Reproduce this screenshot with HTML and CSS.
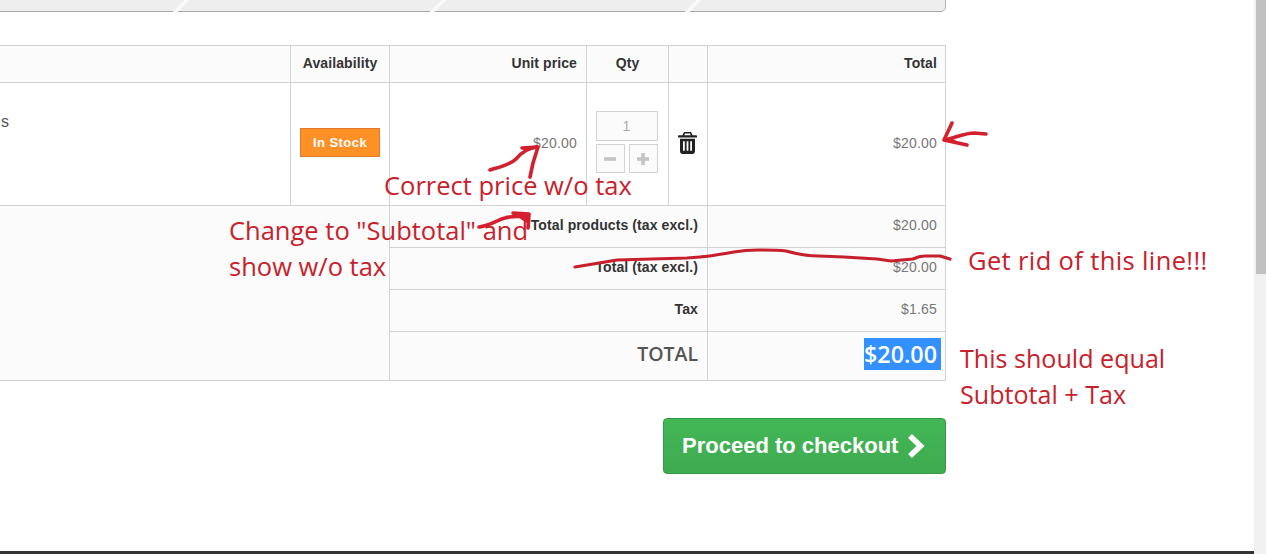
FILE: index.html
```html
<!DOCTYPE html>
<html lang="en">
<head>
<meta charset="utf-8">
<title>Shopping cart summary</title>
<link rel="stylesheet" href="styles.css">
</head>
<body>
<div class="window">
  <main class="page">
    <div class="content">
      <nav class="steps">
        <div class="step step-1"></div>
        <div class="step step-2"></div>
        <div class="step step-3"></div>
        <div class="step step-4"></div>
      </nav>
      <table class="cart">
        <colgroup>
          <col class="c-product"><col class="c-avail"><col class="c-unit"><col class="c-qty"><col class="c-del"><col class="c-total">
        </colgroup>
        <thead>
          <tr class="r-head">
            <th></th>
            <th class="center">Availability</th>
            <th class="right">Unit price</th>
            <th class="center">Qty</th>
            <th></th>
            <th class="right">Total</th>
          </tr>
        </thead>
        <tbody>
          <tr class="r-item">
            <td class="product"><span class="product-name">s</span></td>
            <td class="center stock-cell"><span class="stock">In Stock</span></td>
            <td class="right price">$20.00</td>
            <td class="center qty-cell">
              <div class="qty">
                <div class="qty-input">1</div>
                <div class="qty-btns">
                  <div class="qty-btn"><svg class="qty-ico" viewBox="0 0 14 14"><rect x="1" y="5.200" width="12" height="3.600" fill="#c4c4c4"/></svg></div>
                  <div class="qty-btn"><svg class="qty-ico" viewBox="0 0 14 14"><path d="M1 5.200h4.200V1h3.600v4.200H13v3.600H8.800V13H5.200V8.800H1z" fill="#c4c4c4"/></svg></div>
                </div>
              </div>
            </td>
            <td class="center trash-cell">
              <svg class="trash" viewBox="0 0 19 22"><path fill="#222" fill-rule="evenodd" d="M6 0h7l1.600 3.200H18c.6 0 1 .4 1 1V5.600H0V4.200c0-.6.4-1 1-1h3.400zM7 1.600 6.300 3.200h6.400L12 1.600zM2 6.800h15V19c0 1.700-1.100 3-2.500 3h-10C3.100 22 2 20.700 2 19zM5 9.200v9.600h1.800V9.200zM8.600 9.200v9.600h1.800V9.200zM12.200 9.200v9.600H14V9.200z"/></svg>
            </td>
            <td class="right price">$20.00</td>
          </tr>
          <tr class="r-sum">
            <td class="sum-blank" colspan="2" rowspan="4"></td>
            <td class="right sum-label" colspan="3">Total products (tax excl.)</td>
            <td class="right price">$20.00</td>
          </tr>
          <tr class="r-sum">
            <td class="right sum-label" colspan="3">Total (tax excl.)</td>
            <td class="right price">$20.00</td>
          </tr>
          <tr class="r-sum">
            <td class="right sum-label" colspan="3">Tax</td>
            <td class="right price">$1.65</td>
          </tr>
          <tr class="r-grand">
            <td class="right grand-label" colspan="3">TOTAL</td>
            <td class="right grand-price"><span class="selected">$20.00</span></td>
          </tr>
        </tbody>
      </table>
      <div class="actions">
        <a class="checkout" href="#">Proceed to checkout
          <svg class="chevron" viewBox="0 0 20 26"><path d="M3 3l10.500 10L3 23" fill="none" stroke="#fff" stroke-width="5.600" stroke-linejoin="miter"/></svg>
        </a>
      </div>
    </div>
    <footer class="footer"></footer>
  </main>
  <div class="scrollbar"><div class="thumb"></div></div>

  <svg class="ink" viewBox="0 0 1266 554">
    <path class="stroke" d="M490 170C500 167 510 165 516 159C521 153 527 148 537 147M522 148L538 147L533 163L530 177"/>
    <path class="stroke" d="M952 123L944 140L967 145M944 140C955 138 965 133 974 133L986 134M945 139L955 142"/>
    <path class="stroke" d="M479 227C490 226 497 220 505 218C512 216 520 216 528 217M513 213L529 214L528 228M516 214L527 221"/>
    <path class="stroke thin" d="M575 267L617 260L687 258L700 257C712 256 722 254 734 252C745 250 750 250 758 250C770 250 778 250 786 251C797 254 808 256 819 256L844 257L877 259L891 261L913 259C917 257 921 256 925 256L940 256L950 259"/>
  </svg>
  <p class="note n-correct">Correct price w/o tax</p>
  <p class="note n-change">Change to "Subtotal" and<br>show w/o tax</p>
  <p class="note n-line">Get rid of this line!!!</p>
  <p class="note n-equal">This should equal<br>Subtotal + Tax</p>
</div>
</body>
</html>
```
FILE: styles.css
```css
* { box-sizing: border-box; }
html, body { margin: 0; height: 100%; overflow: hidden; background: #fff; }
body { font-family: "Liberation Sans", Arial, sans-serif; }

.window { position: relative; display: flex; width: 1266px; height: 554px; overflow: hidden; }
.page { flex: 1; display: flex; flex-direction: column; min-width: 0; }
.content { width: 946px; overflow: hidden; }

.steps { display: flex; height: 12px; background: #eeeeee; border-bottom: 1px solid #a8a8a8; border-bottom-right-radius: 5px; border-right: 1px solid #b5b5b5; }
.step { position: relative; }
.step-1 { width: 179px; }
.step-2 { width: 257px; }
.step-3 { width: 255px; }
.step-4 { flex: 1; }
.step:not(.step-4)::after { content: ""; position: absolute; right: -5px; top: -1px; width: 5px; height: 13px; background: #f9f9f9; transform: skewX(-45deg); }

.cart { margin: 33px 0 0 -1px; width: 946px; table-layout: fixed; border-collapse: collapse; color: #333; }
.c-product { width: 291px; }
.c-avail { width: 99px; }
.c-unit { width: 197px; }
.c-qty { width: 82px; }
.c-del { width: 39px; }
.c-total { width: 238px; }
.cart th, .cart td { border: 1px solid #d2d2d2; padding: 0 8px; }
.cart th { background: #fbfbfb; font-size: 14px; font-weight: 700; letter-spacing: .1px; color: #333; padding-bottom: 2px; }
.r-head { height: 37px; }
.r-item { height: 123px; }
.r-sum { height: 42px; background: #fbfbfb; }
.r-grand { height: 49px; background: #fbfbfb; }
.center { text-align: center; }
.cart .right { text-align: right; padding-right: 9px; }
.cart th:last-child, .cart td:last-child { padding-right: 8px; }
.cart .product { vertical-align: top; padding: 29px 0 0 1px; }
.product-name { font-size: 16px; line-height: 19px; color: #555; }
.cart .stock-cell { padding-bottom: 4px; }
.stock { display: inline-block; width: 80px; height: 29px; line-height: 28px; background: #fe9126; border: 1px solid #e4792b; color: #fff; font-size: 13px; font-weight: 700; letter-spacing: .45px; }
.price { font-size: 14px; letter-spacing: .2px; color: #777; }
.r-item .price { padding-bottom: 2px; }
.r-sum td { padding-bottom: 4px; }
.sum-blank { background: #fbfbfb; }
.sum-label { font-size: 14px; font-weight: 700; letter-spacing: .1px; color: #333; }
.cart .grand-label { font-family: "Open Sans", sans-serif; font-size: 19.5px; font-weight: 600; color: #555; padding-bottom: 6px; }
.cart td.grand-price { padding-right: 4px; padding-bottom: 4px; }
.selected { display: inline-block; height: 32px; padding: 0 4px 0 0; background: #3390ff; color: #fff; font-family: "Open Sans", sans-serif; font-size: 23.3px; font-weight: 600; line-height: 32px; }

.cart .qty-cell { padding: 0 9px 4px 7px; }
.cart .trash-cell { padding: 0 9px 2px 7px; }
.qty { display: flex; flex-direction: column; gap: 3px; width: 62px; margin: 0 auto; }
.qty-input { height: 30px; line-height: 28px; border: 1px solid #d2d2d2; background: #fbfbfb; color: #aaa; font-size: 14px; }
.qty-btns { display: flex; justify-content: space-between; }
.qty-btn { display: flex; align-items: center; justify-content: center; width: 29px; height: 29px; border: 1px solid #d2d2d2; background: #fbfbfb; }
.qty-ico { width: 14px; height: 14px; display: block; }
.trash { display: block; width: 19px; height: 22px; margin: 0 auto; }

.actions { display: flex; justify-content: flex-end; margin-top: 37px; }
.checkout { display: flex; align-items: center; gap: 9px; width: 283px; height: 56px; padding-left: 18px; border: 1px solid #36964a; border-radius: 4px; background: linear-gradient(#43b756, #3dab50); color: #fff; font-size: 22px; font-weight: 700; text-decoration: none; }
.chevron { width: 20px; height: 26px; display: block; }

.footer { margin-top: auto; height: 3px; background: #333; }

.scrollbar { flex: none; width: 12px; background: #f1f1f1; padding-left: 2px; }
.thumb { height: 274px; background: #c1c1c1; }

.ink { position: absolute; left: 0; top: 0; width: 1266px; height: 554px; pointer-events: none; }
.stroke { fill: none; stroke: #d4202e; stroke-width: 3.600; stroke-linecap: round; stroke-linejoin: round; }
.stroke.thin { stroke: #c7202c; stroke-width: 3.200; }

.note { position: absolute; margin: 0; font-family: "Open Sans", sans-serif; font-size: 25.5px; line-height: 36px; color: #c8212b; white-space: nowrap; }
.n-correct { left: 384px; top: 167px; }
.n-change { left: 229px; top: 212px; }
.n-line { left: 968px; top: 242px; letter-spacing: .37px; }
.n-equal { left: 960px; top: 340px; font-size: 25.1px; }
```
